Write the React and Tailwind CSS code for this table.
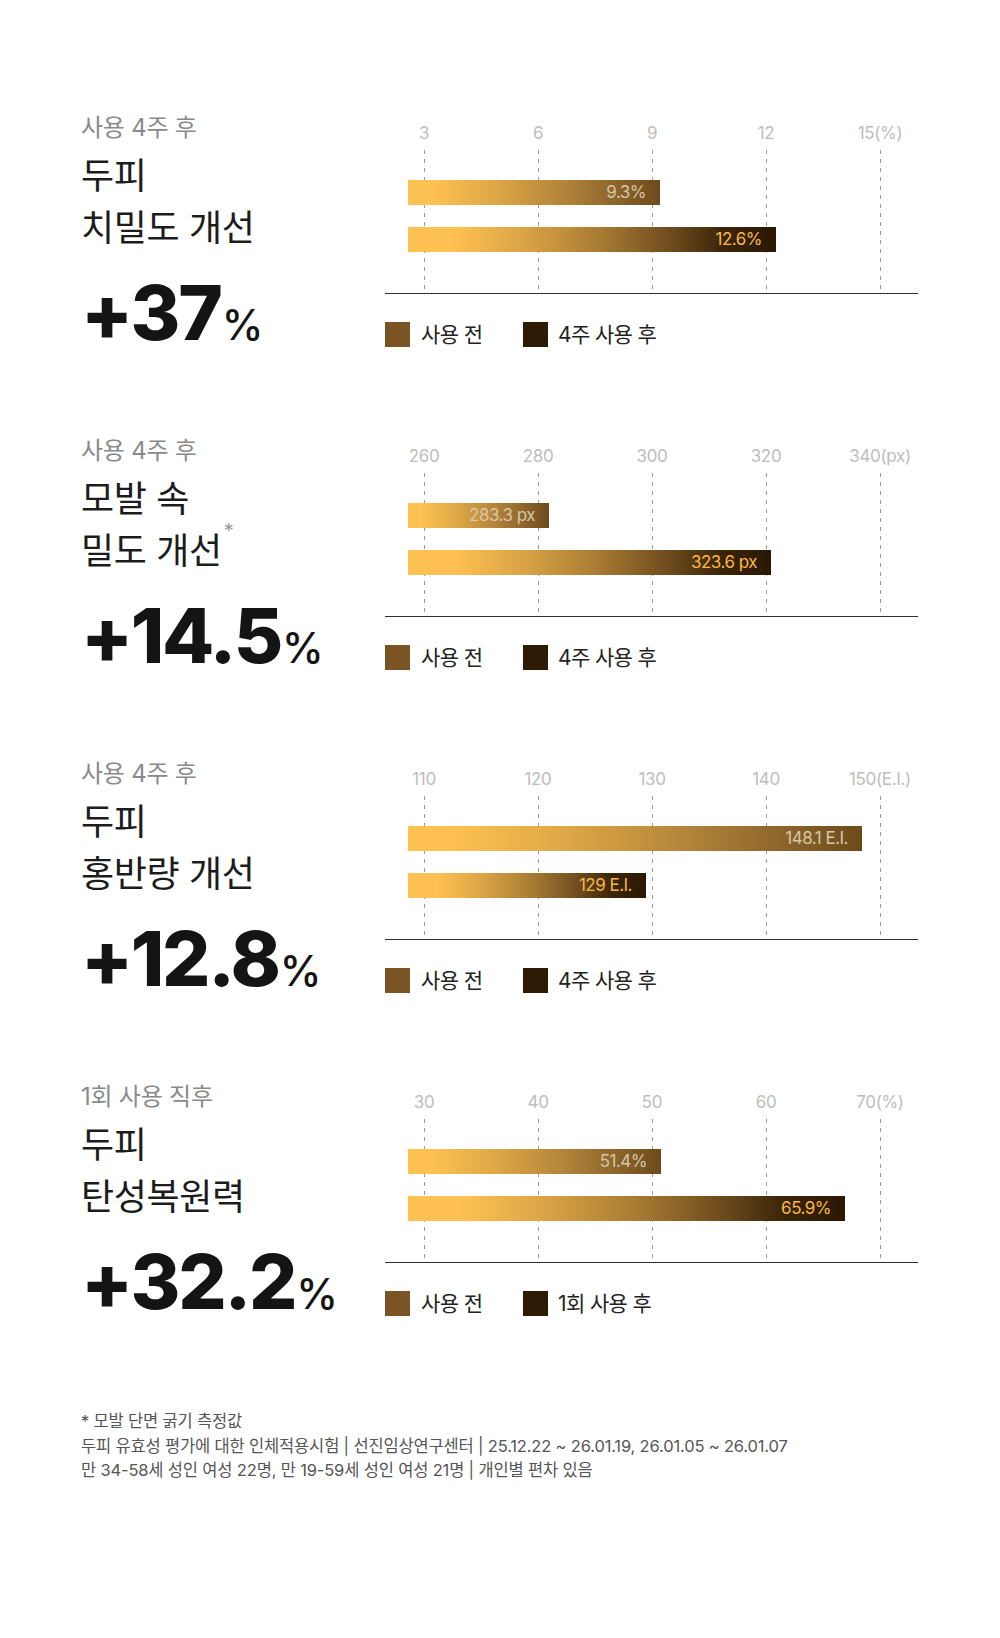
import React from 'react';

const sections = [
  {
    label: '사용 4주 후',
    title: ['두피', '치밀도 개선'],
    value: '+37',
    ticks: ['3', '6', '9', '12', '15(%)'],
    bars: [
      { width: 252, text: '9.3%' },
      { width: 368, text: '12.6%' },
    ],
    after: '4주 사용 후',
  },
  {
    label: '사용 4주 후',
    title: ['모발 속', '밀도 개선'],
    note: true,
    value: '+14.5',
    ticks: ['260', '280', '300', '320', '340(px)'],
    bars: [
      { width: 141, text: '283.3 px' },
      { width: 363, text: '323.6 px' },
    ],
    after: '4주 사용 후',
  },
  {
    label: '사용 4주 후',
    title: ['두피', '홍반량 개선'],
    value: '+12.8',
    ticks: ['110', '120', '130', '140', '150(E.I.)'],
    bars: [
      { width: 454, text: '148.1 E.I.' },
      { width: 238, text: '129 E.I.' },
    ],
    after: '4주 사용 후',
  },
  {
    label: '1회 사용 직후',
    title: ['두피', '탄성복원력'],
    value: '+32.2',
    ticks: ['30', '40', '50', '60', '70(%)'],
    bars: [
      { width: 253, text: '51.4%' },
      { width: 437, text: '65.9%' },
    ],
    after: '1회 사용 후',
  },
];

// gridline x positions inside the chart box
const gridX = [39, 153, 267, 381, 495];
const tickPos = ['left-[39px]', 'left-[153px]', 'left-[267px]', 'left-[381px]', 'left-[495px]'];

const Chart = ({ ticks, bars, after }) => {
  return (
    <div className="relative w-[533px] h-[260px]">
      {ticks.map((t, i) => (
        <div
          key={t}
          className={`absolute top-[22px] ${tickPos[i]} -translate-x-1/2 text-[17px] leading-[22px] text-[#bdbdbd] tracking-[-0.02em] whitespace-nowrap`}
        >
          {t}
        </div>
      ))}
      <svg className="absolute left-0 top-[50px]" width="533" height="144">
        {gridX.map((x) => (
          <line key={x} x1={x + 0.5} y1="0" x2={x + 0.5} y2="144" stroke="#9a9a9a" strokeWidth="1" strokeDasharray="4 5" />
        ))}
      </svg>
      <div className="relative pt-[80px] pl-[23px] flex flex-col gap-[22px]">
        <div
          className="h-[25px] bg-[linear-gradient(90deg,#ffc151_0%,#ffc151_9%,#dca646_36%,#b2843a_62%,#6c4a1c_100%)] text-right pr-[14px] text-[17px] leading-[25px] text-[#d6c6a8] tracking-[-0.03em]"
          style={{ width: bars[0].width }}
        >
          {bars[0].text}
        </div>
        <div
          className="h-[25px] bg-[linear-gradient(90deg,#ffc151_0%,#ffc151_12%,#d9a345_32%,#a97c33_52%,#745020_70%,#3b2509_86%,#2a1805_100%)] text-right pr-[14px] text-[17px] leading-[25px] text-[#f9b844] tracking-[-0.03em]"
          style={{ width: bars[1].width }}
        >
          {bars[1].text}
        </div>
      </div>
      <div className="relative mt-[41px] h-px bg-[#2e2e2e]" />
      <div className="mt-[28px] flex items-center text-[21px] leading-[25px] text-[#222] tracking-[-0.03em]">
        <div className="w-[138px] flex items-center">
          <span className="w-[25px] h-[25px] bg-[#7a5523]" />
          <span className="ml-[11px]">사용 전</span>
        </div>
        <div className="flex items-center">
          <span className="w-[25px] h-[25px] bg-[#2e1b05]" />
          <span className="ml-[10px]">{after}</span>
        </div>
      </div>
    </div>
  );
};

const App = () => {
  return (
    <div className="w-[1000px] min-h-[1638px] bg-white pt-[100px] pl-[81px] font-[Inter,'Noto_Sans_CJK_KR',sans-serif]">
      {sections.map((s, idx) => (
        <div key={idx} className="flex h-[323px]">
          <div className="w-[304px]">
            <div className="pt-[12px] text-[24px] leading-[32px] text-[#8a8a8a] tracking-[-0.01em]">{s.label}</div>
            <div className="mt-[6px] text-[36px] leading-[52px] text-[#1c1c1c] tracking-[-0.01em]">
              <div>{s.title[0]}</div>
              <div>
                {s.title[1]}
                {s.note && <span className="inline-block align-top ml-[2px] -mt-[4px] text-[20px] leading-[20px] text-[#9a9a9a]">*</span>}
              </div>
            </div>
            <div className="mt-[20px] flex items-baseline leading-none text-[#141414]">
              <span className="text-[76px] font-extrabold tracking-[-0.03em]">{s.value}</span>
              <span className="ml-[1px] text-[42px] font-medium tracking-[-0.02em]">%</span>
            </div>
          </div>
          <Chart ticks={s.ticks} bars={s.bars} after={s.after} />
        </div>
      ))}
      <div className="mt-[17px] text-[16.5px] leading-[24.5px] text-[#555] tracking-[-0.01em]">
        <p>* 모발 단면 굵기 측정값</p>
        <p>두피 유효성 평가에 대한 인체적용시험 | 선진임상연구센터 | 25.12.22 ~ 26.01.19, 26.01.05 ~ 26.01.07</p>
        <p>만 34-58세 성인 여성 22명, 만 19-59세 성인 여성 21명 | 개인별 편차 있음</p>
      </div>
    </div>
  );
};

export default App;
